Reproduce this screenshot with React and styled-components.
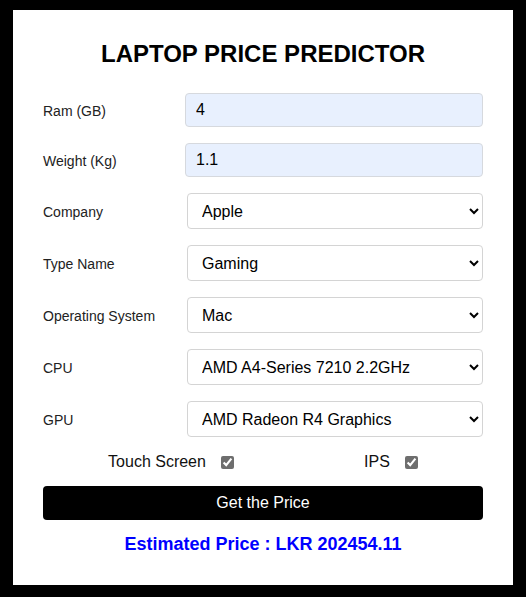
import React from "react";
import styled, { createGlobalStyle } from "styled-components";

const Global = createGlobalStyle`
  html, body { margin: 0; padding: 0; background: #000; }
  body { font-family: "Liberation Sans", Arial, sans-serif; }
  * { box-sizing: border-box; }
`;

const Page = styled.div`
  padding-top: 10px;
  padding-bottom: 12px;
`;

const Card = styled.div`
  width: 500px;
  margin: 0 auto;
  background: #fff;
  padding: 30px 30px 30px;
`;

const Title = styled.h1`
  margin: 0 0 25px;
  font-size: 24px;
  line-height: 28px;
  font-weight: bold;
  text-align: center;
  color: #000;
`;

const Row = styled.div`
  display: flex;
  align-items: center;
  margin-bottom: 16px;
`;

const Label = styled.label`
  flex: 0 0 ${(p) => (p.$select ? 144 : 142)}px;
  font-size: 14px;
  line-height: 18px;
  padding-top: 1px;
  color: #222;
`;

const TextInput = styled.input`
  flex: 1;
  min-width: 0;
  height: 34px;
  padding: 0 10px;
  font-family: inherit;
  font-size: 16px;
  color: #000;
  background: #e8f0fe;
  border: 1px solid #d6d9de;
  border-radius: 4px;
  outline: none;
`;

const Select = styled.select`
  flex: 1;
  min-width: 0;
  height: 36px;
  padding: 0 8px 0 10px;
  font-family: inherit;
  font-size: 16px;
  color: #000;
  background: #fff;
  border: 1px solid #d4d4d4;
  border-radius: 4px;
  outline: none;
`;

const CheckRow = styled.div`
  display: flex;
  justify-content: space-around;
  align-items: center;
  line-height: 18px;
  margin-bottom: 15px;
`;

const CheckGroup = styled.label`
  display: flex;
  align-items: center;
  gap: 15px;
  font-size: 16px;
  color: #111;
`;

const Check = styled.input`
  margin: 0;
  width: 13px;
  height: 13px;
  accent-color: #6e6e6e;
`;

const Button = styled.button`
  display: block;
  width: 100%;
  height: 34px;
  border: none;
  border-radius: 4px;
  background: #000;
  color: #fff;
  font-family: inherit;
  font-size: 16px;
  cursor: pointer;
`;

const Result = styled.div`
  margin-top: 14px;
  text-align: center;
  font-size: 18px;
  line-height: 21px;
  font-weight: bold;
  color: #0000ff;
`;

const selects = [
  { label: "Company", value: "Apple", options: ["Apple", "Acer", "Asus", "Dell", "HP", "Lenovo", "MSI"] },
  { label: "Type Name", value: "Gaming", options: ["Gaming", "Notebook", "Ultrabook", "2 in 1 Convertible", "Workstation"] },
  { label: "Operating System", value: "Mac", options: ["Mac", "Windows", "Linux", "Other"] },
  { label: "CPU", value: "AMD A4-Series 7210 2.2GHz", options: ["AMD A4-Series 7210 2.2GHz", "Intel Core i5 2.3GHz", "Intel Core i7 2.7GHz"] },
  { label: "GPU", value: "AMD Radeon R4 Graphics", options: ["AMD Radeon R4 Graphics", "Intel HD Graphics 620", "Nvidia GeForce GTX 1050"] },
];

export default function App() {
  return (
    <>
      <Global />
      <Page>
        <Card>
          <Title>LAPTOP PRICE PREDICTOR</Title>
          <Row>
            <Label>Ram (GB)</Label>
            <TextInput defaultValue="4" />
          </Row>
          <Row>
            <Label>Weight (Kg)</Label>
            <TextInput defaultValue="1.1" />
          </Row>
          {selects.map((s) => (
            <Row key={s.label}>
              <Label $select>{s.label}</Label>
              <Select defaultValue={s.value}>
                {s.options.map((o) => (
                  <option key={o}>{o}</option>
                ))}
              </Select>
            </Row>
          ))}
          <CheckRow>
            <CheckGroup>
              Touch Screen <Check type="checkbox" defaultChecked />
            </CheckGroup>
            <CheckGroup>
              IPS <Check type="checkbox" defaultChecked />
            </CheckGroup>
          </CheckRow>
          <Button>Get the Price</Button>
          <Result>Estimated Price : LKR 202454.11</Result>
        </Card>
      </Page>
    </>
  );
}
